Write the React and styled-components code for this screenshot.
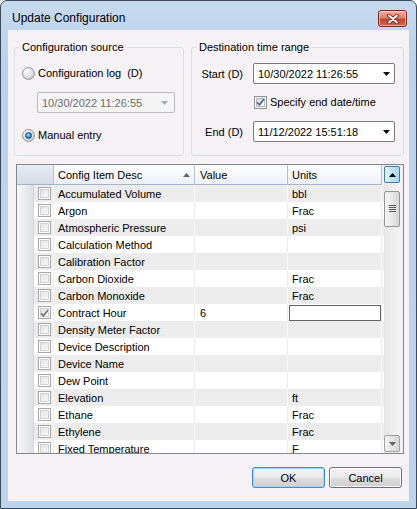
import React from "react";
import styled, { createGlobalStyle } from "styled-components";

const GlobalStyle = createGlobalStyle`
  html, body {
    margin: 0;
    padding: 0;
    background: #ffffff;
  }
  body {
    font-family: "Liberation Sans", Arial, sans-serif;
    font-size: 11px;
    color: #000;
  }
`;

// 창 프레임
const Window = styled.div`
  width: 417px;
  height: 509px;
  box-sizing: border-box;
  border: 1px solid #3d4a5a;
  border-radius: 7px 7px 0 0;
  background: linear-gradient(#c6d9ef, #bcd2eb 60px, #bed4ed);
  padding: 0 7px 7px 7px;
  display: flex;
  flex-direction: column;
  overflow: hidden;
`;

const TitleBar = styled.div`
  height: 29px;
  display: flex;
  align-items: flex-start;
  justify-content: space-between;
  flex-shrink: 0;
`;

const Title = styled.div`
  margin: 10px 0 0 4px;
  font-size: 12px;
  line-height: 14px;
  color: #000;
`;

const CloseButton = styled.div`
  width: 29px;
  height: 17px;
  margin: 9px 2px 0 0;
  box-sizing: border-box;
  border: 1px solid #7a2b20;
  border-radius: 3px;
  background: linear-gradient(#e9b0a4, #d7826f 45%, #c2432c 55%, #cf6a4f);
  box-shadow: inset 0 0 0 1px rgba(255, 220, 210, 0.55);
  display: flex;
  align-items: center;
  justify-content: center;
`;

const Client = styled.div`
  flex: 1;
  background: #f5f1f5;
  padding: 10px 5px 0 6px;
  display: flex;
  flex-direction: column;
`;

const TopRow = styled.div`
  display: flex;
  gap: 7px;
  align-items: stretch;
`;

const GroupBox = styled.fieldset`
  margin: 0;
  width: ${(p) => p.$w}px;
  min-width: 0;
  box-sizing: border-box;
  padding: 0 7px 12px 7px;
  border: 1px solid #d5dfe5;
  border-radius: 3px;
`;

const Legend = styled.legend`
  padding: 0 2px;
  margin-left: -2px;
  font-size: 11px;
  line-height: 14px;
`;

const GroupInner = styled.div`
  display: flex;
  flex-direction: column;
`;

const RadioRow = styled.div`
  display: flex;
  align-items: center;
  height: 16px;
  margin-top: ${(p) => p.$mt}px;
  gap: 3px;
`;

const Radio = styled.span`
  width: 13px;
  height: 13px;
  box-sizing: border-box;
  border-radius: 50%;
  border: 1px solid #929496;
  background: radial-gradient(circle at 35% 30%, #ffffff 0%, #e4e6e8 40%, #b9bdc2 100%);
  display: flex;
  align-items: center;
  justify-content: center;
  flex-shrink: 0;

  &::after {
    content: "";
    display: ${(p) => (p.$checked ? "block" : "none")};
    width: 7px;
    height: 7px;
    box-sizing: border-box;
    border-radius: 50%;
    border: 1px solid #174a7c;
    background: radial-gradient(circle at 45% 40%, #b7ecff 0%, #3d9be0 45%, #0e4f8e 100%);
  }
`;

const Gap = styled.span`
  margin-left: ${(p) => p.$w}px;
`;

const Combo = styled.div`
  width: ${(p) => p.$w}px;
  height: 21px;
  margin-left: ${(p) => p.$ml || 0}px;
  margin-top: ${(p) => p.$mt || 0}px;
  box-sizing: border-box;
  border: 1px solid ${(p) => (p.$disabled ? "#b8bcc0" : "#7a7a7a")};
  border-radius: 2px;
  background: ${(p) => (p.$disabled ? "#f4f4f4" : "#ffffff")};
  color: ${(p) => (p.$disabled ? "#6d6d6d" : "#000")};
  display: flex;
  align-items: center;
  justify-content: space-between;
  padding: 0 ${(p) => (p.$disabled ? 6 : 4)}px 0 4px;
  flex-shrink: 0;
`;

const FieldRow = styled.div`
  display: flex;
  align-items: center;
  height: 21px;
  margin-top: ${(p) => p.$mt}px;
`;

const FieldLabel = styled.span`
  width: 44px;
  text-align: right;
  margin-right: 10px;
`;

const CheckRow = styled.div`
  display: flex;
  align-items: center;
  height: 14px;
  margin-top: 11px;
  margin-left: 55px;
  gap: 3px;
`;

const CheckBox = styled.span`
  width: 13px;
  height: 13px;
  box-sizing: border-box;
  border: 1px solid ${(p) => (p.$faded ? "#a7a7a7" : "#8e8f8f")};
  background: #fff;
  padding: 1px;
  display: flex;
  flex-shrink: 0;
`;

const CheckInner = styled.span`
  flex: 1;
  border: 1px solid ${(p) => (p.$faded ? "#d0d0d0" : "#b2b7bd")};
  background: ${(p) =>
    p.$faded
      ? "linear-gradient(135deg, #e4e4e4, #f8f8f8)"
      : "linear-gradient(135deg, #d9dde2, #f7f8f9)"};
  display: flex;
  align-items: center;
  justify-content: center;
  overflow: visible;
`;

// 그리드
const Grid = styled.div`
  margin: 8px 0 0 2px;
  width: 388px;
  height: 290px;
  box-sizing: border-box;
  border: 1px solid #828790;
  background: #eeeeee;
  display: flex;
  flex-shrink: 0;
`;

const Table = styled.div`
  width: 367px;
  overflow: hidden;
  display: flex;
  flex-direction: column;
  background: #f0f0f0;
`;

const HeaderRow = styled.div`
  display: flex;
  height: 20px;
  flex-shrink: 0;
`;

const HeaderCell = styled.div`
  width: ${(p) => p.$w}px;
  box-sizing: border-box;
  border-right: 1px solid #b3c0d2;
  border-bottom: 1px solid #a3b3c8;
  background: ${(p) =>
    p.$corner
      ? "linear-gradient(#e8edf3, #d4dbe5)"
      : "linear-gradient(#ffffff, #f4f6f9 60%, #eceff4)"};
  padding-left: ${(p) => p.$pl || 0}px;
  padding-right: 4px;
  display: flex;
  align-items: center;
  justify-content: space-between;
`;

const Row = styled.div`
  display: flex;
  height: 17px;
  flex-shrink: 0;
  background: ${(p) => (p.$alt ? "#ececec" : "#ffffff")};
`;

const RowHead = styled.div`
  width: 17px;
  box-sizing: border-box;
  border-right: 1px solid #d2d6dc;
  background: linear-gradient(to right, #f8f8f8, #dde0e5);
`;

const Cell = styled.div`
  width: ${(p) => p.$w}px;
  box-sizing: border-box;
  border-right: 1px solid ${(p) => (p.$alt ? "#f8f8f8" : "#ebebeb")};
  padding-left: ${(p) => p.$pl || 0}px;
  display: flex;
  align-items: center;
  white-space: nowrap;
  overflow: hidden;
`;

const EditBox = styled.div`
  width: 93px;
  height: 16px;
  margin: 1px 0 0 -${(p) => p.$pull}px;
  align-self: flex-start;
  box-sizing: border-box;
  border: 1px solid #646464;
  background: #fff;
`;

const ScrollBar = styled.div`
  width: 17px;
  box-sizing: border-box;
  padding: 1px 1px 1px 0;
  background: linear-gradient(to right, #e6e6e6, #f4f4f4);
  display: flex;
  flex-direction: column;
`;

const ScrollButton = styled.div`
  height: 17px;
  box-sizing: border-box;
  border: 1px solid ${(p) => (p.$hover ? "#3c7fb1" : "#a2a2a2")};
  border-radius: 2px;
  background: ${(p) =>
    p.$hover
      ? "linear-gradient(to right, #e6f5fd, #bfe4f8 50%, #a8d7f2)"
      : "linear-gradient(to right, #f4f4f4, #e4e4e4 50%, #d6d6d6)"};
  display: flex;
  align-items: center;
  justify-content: center;
  margin-top: ${(p) => (p.$bottom ? "auto" : "0")};
`;

const Thumb = styled.div`
  height: 36px;
  margin-top: 8px;
  box-sizing: border-box;
  border: 1px solid #959595;
  border-radius: 2px;
  background: linear-gradient(to right, #f5f5f5, #e7e7e7 50%, #d6d6d6);
  display: flex;
  align-items: center;
  justify-content: center;
`;

const ButtonRow = styled.div`
  display: flex;
  justify-content: flex-end;
  gap: 4px;
  margin-top: 13px;
  padding-right: 2px;
`;

const Button = styled.div`
  width: 73px;
  height: 21px;
  box-sizing: border-box;
  border: 1px solid ${(p) => (p.$default ? "#3c8fd6" : "#707070")};
  border-radius: 3px;
  background: linear-gradient(#f2f2f2, #ebebeb 50%, #dddddd 51%, #cfcfcf);
  box-shadow: ${(p) =>
    p.$default ? "inset 0 0 0 1px #9fd6f7" : "inset 0 0 0 1px #fcfcfc"};
  display: flex;
  align-items: center;
  justify-content: center;
`;

const ArrowDown = ({ color = "#000" }) => (
  <svg width="7" height="4" viewBox="0 0 7 4">
    <path d="M0 0h7L3.5 4z" fill={color} />
  </svg>
);

const ArrowUp = ({ color = "#000", w = 7, h = 4 }) => (
  <svg width={w} height={h} viewBox="0 0 7 4">
    <path d="M0 4h7L3.5 0z" fill={color} />
  </svg>
);

const Check = ({ color }) => (
  <svg width="9" height="8" viewBox="0 0 9 8" style={{ margin: "-1px" }}>
    <path d="M1 4.2L3.4 6.8L8 1" fill="none" stroke={color} strokeWidth="1.6" />
  </svg>
);

const items = [
  ["Accumulated Volume", "", "bbl"],
  ["Argon", "", "Frac"],
  ["Atmospheric Pressure", "", "psi"],
  ["Calculation Method", "", ""],
  ["Calibration Factor", "", ""],
  ["Carbon Dioxide", "", "Frac"],
  ["Carbon Monoxide", "", "Frac"],
  ["Contract Hour", "6", "", true],
  ["Density Meter Factor", "", ""],
  ["Device Description", "", ""],
  ["Device Name", "", ""],
  ["Dew Point", "", ""],
  ["Elevation", "", "ft"],
  ["Ethane", "", "Frac"],
  ["Ethylene", "", "Frac"],
  ["Fixed Temperature", "", "F"],
];

const App = () => {
  return (
    <>
      <GlobalStyle />
      <Window>
        <TitleBar>
          <Title>Update Configuration</Title>
          <CloseButton>
            <svg width="12" height="10" viewBox="0 0 12 10">
              <path d="M2 1.5L10 8.5M10 1.5L2 8.5" stroke="#4a1c12" strokeWidth="3.6" strokeLinecap="round" />
              <path d="M2 1.5L10 8.5M10 1.5L2 8.5" stroke="#ffffff" strokeWidth="2" strokeLinecap="round" />
            </svg>
          </CloseButton>
        </TitleBar>
        <Client>
          <TopRow>
            <GroupBox $w={170}>
              <Legend>Configuration source</Legend>
              <GroupInner>
                <RadioRow $mt={11}>
                  <Radio />
                  <span>Configuration log</span>
                  <Gap $w={3}>(D)</Gap>
                </RadioRow>
                <Combo $w={138} $ml={15} $mt={11} $disabled>
                  <span>10/30/2022 11:26:55</span>
                  <ArrowDown color="#a8a8a8" />
                </Combo>
                <RadioRow $mt={14}>
                  <Radio $checked />
                  <span>Manual entry</span>
                </RadioRow>
              </GroupInner>
            </GroupBox>
            <GroupBox $w={213}>
              <Legend>Destination time range</Legend>
              <GroupInner>
                <FieldRow $mt={9}>
                  <FieldLabel>Start (D)</FieldLabel>
                  <Combo $w={142}>
                    <span>10/30/2022 11:26:55</span>
                    <ArrowDown />
                  </Combo>
                </FieldRow>
                <CheckRow>
                  <CheckBox>
                    <CheckInner>
                      <Check color="#4a6690" />
                    </CheckInner>
                  </CheckBox>
                  <span>Specify end date/time</span>
                </CheckRow>
                <FieldRow $mt={12}>
                  <FieldLabel>End (D)</FieldLabel>
                  <Combo $w={142}>
                    <span>11/12/2022 15:51:18</span>
                    <ArrowDown />
                  </Combo>
                </FieldRow>
              </GroupInner>
            </GroupBox>
          </TopRow>

          <Grid>
            <Table>
              <HeaderRow>
                <HeaderCell $w={37} $corner />
                <HeaderCell $w={141} $pl={4}>
                  <span>Config Item Desc</span>
                  <ArrowUp color="#55657a" w={7} h={4} />
                </HeaderCell>
                <HeaderCell $w={93} $pl={5}>
                  Value
                </HeaderCell>
                <HeaderCell $w={94} $pl={4}>
                  Units
                </HeaderCell>
              </HeaderRow>
              {items.map(([desc, value, units, checked], i) => {
                const alt = i % 2 === 0;
                return (
                  <Row key={desc} $alt={alt}>
                    <RowHead />
                    <Cell $w={20} $pl={4} $alt={alt}>
                      <CheckBox $faded>
                        <CheckInner $faded>
                          {checked && <Check color="#707070" />}
                        </CheckInner>
                      </CheckBox>
                    </Cell>
                    <Cell $w={141} $pl={4} $alt={alt}>
                      {desc}
                    </Cell>
                    <Cell $w={93} $pl={5} $alt={alt}>
                      {value}
                    </Cell>
                    <Cell $w={94} $pl={4} $alt={alt}>
                      {checked ? <EditBox $pull={3} /> : units}
                    </Cell>
                  </Row>
                );
              })}
            </Table>
            <ScrollBar>
              <ScrollButton $hover>
                <ArrowUp />
              </ScrollButton>
              <Thumb>
                <svg width="7" height="8" viewBox="0 0 7 8">
                  {[0, 2, 4, 6].map((y) => (
                    <rect key={y} x="0" y={y} width="7" height="1" fill="#5c5c5c" />
                  ))}
                </svg>
              </Thumb>
              <ScrollButton $bottom>
                <ArrowDown color="#606060" />
              </ScrollButton>
            </ScrollBar>
          </Grid>

          <ButtonRow>
            <Button $default>OK</Button>
            <Button>Cancel</Button>
          </ButtonRow>
        </Client>
      </Window>
    </>
  );
};

export default App;
